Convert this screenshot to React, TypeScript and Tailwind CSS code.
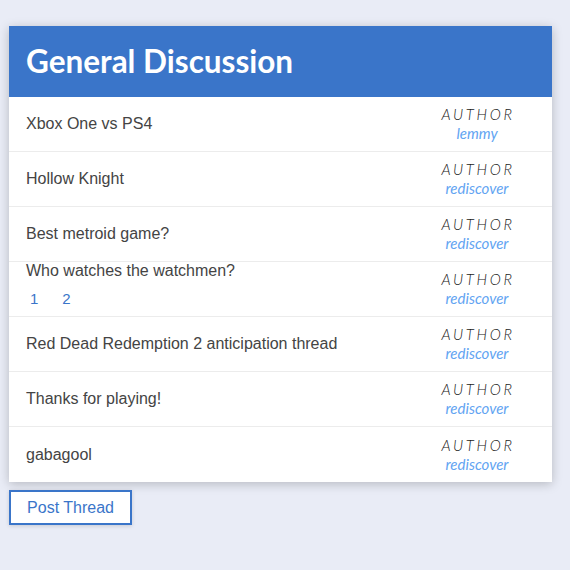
import React from "react";

interface Thread {
  title: string;
  author: string;
  pages?: number[];
}

const threads: Thread[] = [
  { title: "Xbox One vs PS4", author: "lemmy" },
  { title: "Hollow Knight", author: "rediscover" },
  { title: "Best metroid game?", author: "rediscover" },
  { title: "Who watches the watchmen?", author: "rediscover", pages: [1, 2] },
  { title: "Red Dead Redemption 2 anticipation thread", author: "rediscover" },
  { title: "Thanks for playing!", author: "rediscover" },
  { title: "gabagool", author: "rediscover" },
];

const sans = { fontFamily: '"Liberation Sans", Arial, sans-serif' };

const ThreadRow: React.FC<{ thread: Thread; last: boolean }> = ({ thread, last }) => (
  <div
    className={`flex h-[55px] items-center ${last ? "" : "border-b border-[#ececec]"}`}
  >
    <div className={`flex-1 pl-[17px] ${thread.pages ? "self-start" : ""}`}>
      <div className="text-[16px] leading-[18px] text-[#444]" style={sans}>
        {thread.title}
      </div>
      {thread.pages && (
        <div className="mt-[10px] flex gap-[24px] pl-[4px] text-[15px] leading-[18px] text-[#3a75c9]" style={sans}>
          {thread.pages.map((p) => (
            <span key={p}>{p}</span>
          ))}
        </div>
      )}
    </div>
    <div className="w-[150px] text-center" style={{ fontFamily: "Lato, sans-serif" }}>
      <div className="pl-[2px] text-[15px] font-light italic leading-[19px] tracking-[2.7px] text-[#222]">AUTHOR</div>
      <div className="text-[15px] italic leading-[19px] text-[#62a4f2]">{thread.author}</div>
    </div>
  </div>
);

export default function App() {
  return (
    <div className="min-h-[570px] bg-[#e9ecf6] pl-[9px] pt-[26px]">
      <div className="w-[543px] bg-white shadow-[0_2px_10px_rgba(0,0,0,0.22)]">
        <div className="flex h-[71px] items-center bg-[#3a75c9] pl-[17px]">
          <h1 className="text-[31.5px] font-bold leading-none text-white" style={{ fontFamily: "Lato, sans-serif" }}>
            General Discussion
          </h1>
        </div>
        {threads.map((t, i) => (
          <ThreadRow key={t.title} thread={t} last={i === threads.length - 1} />
        ))}
      </div>
      <button
        className="mt-[8px] h-[35px] w-[123px] border-2 border-[#3a75c9] bg-white text-[16px] text-[#3a75c9] shadow-[0_1px_4px_rgba(0,0,0,0.15)]"
        style={sans}
      >
        Post Thread
      </button>
    </div>
  );
}
